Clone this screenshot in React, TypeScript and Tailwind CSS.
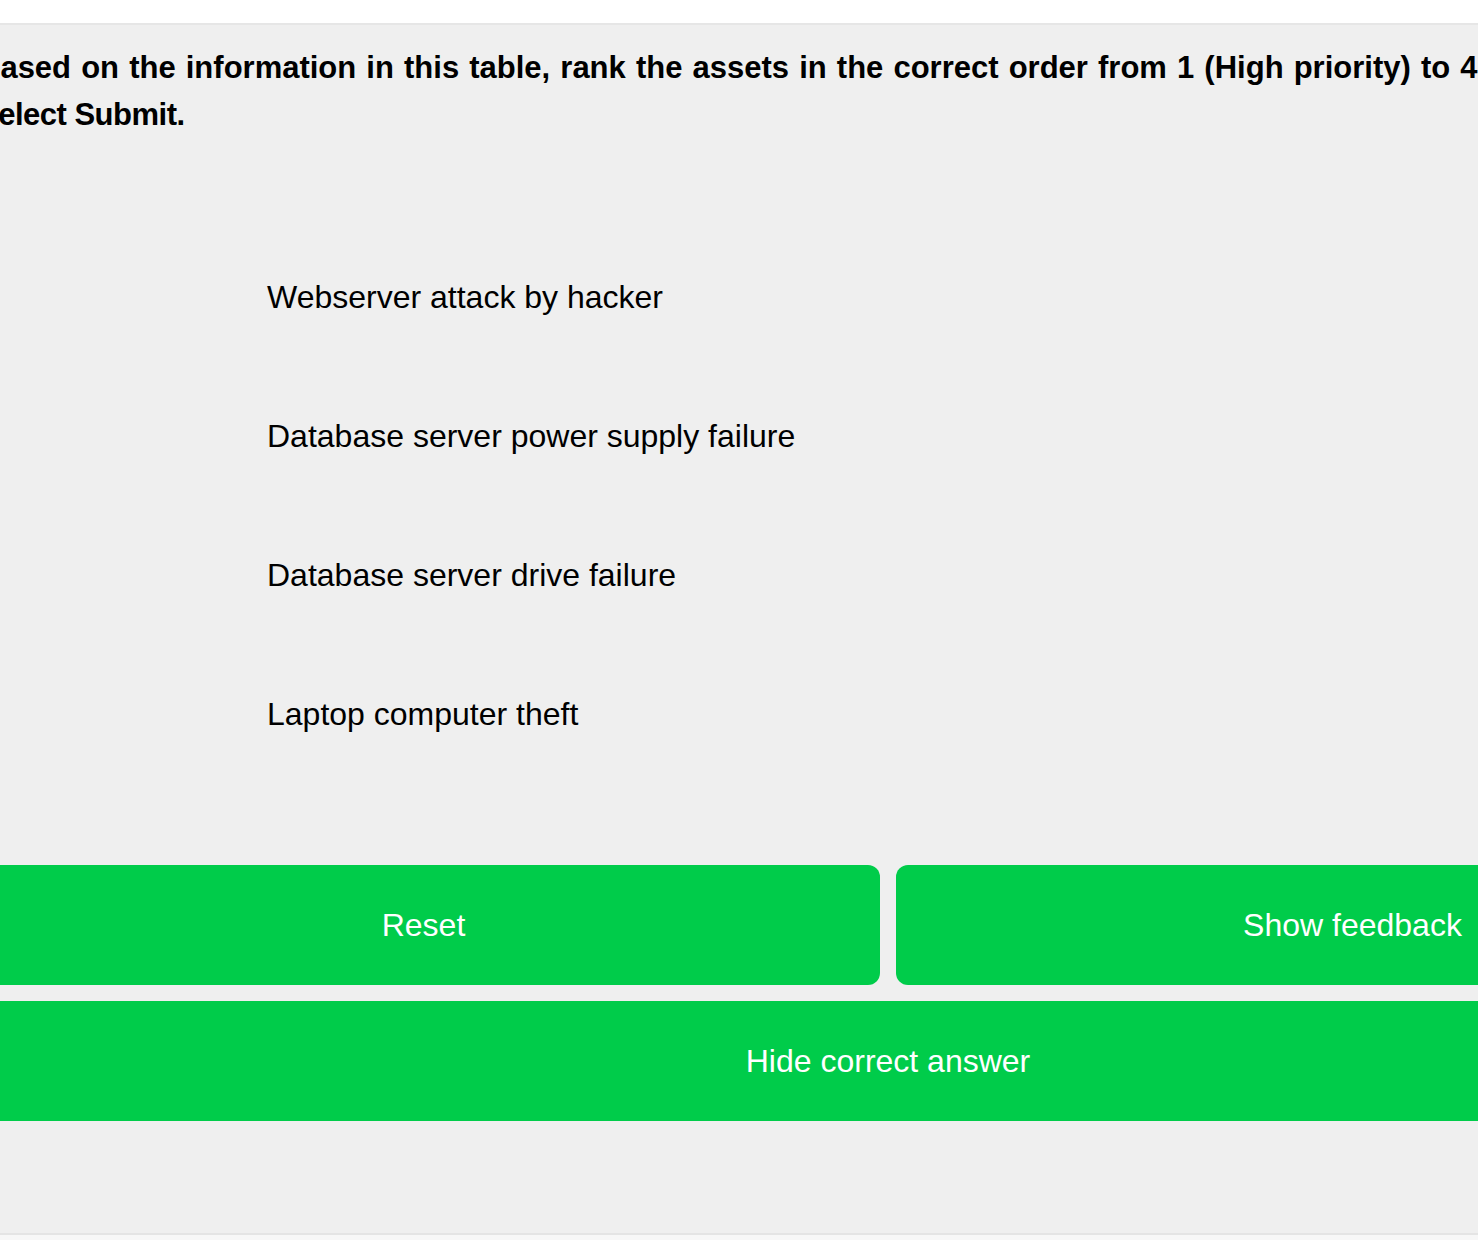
const items = [
  "Webserver attack by hacker",
  "Database server power supply failure",
  "Database server drive failure",
  "Laptop computer theft",
];

export default function App() {
  return (
    <div className="w-full h-[1240px] overflow-hidden bg-[#f7f7f7] font-['Liberation_Sans',Arial,sans-serif] text-black">
      <div className="h-[23px] bg-white border-b-2 border-[#e6e6e6] box-content" />
      <div className="bg-[#efefef] border-b-2 border-[#e4e4e4]">
        <div className="ml-[-33px] w-[1842px] pt-[19px] pb-[112px]">
          <p className="pl-[11px] text-[31px] leading-[47px] font-bold whitespace-nowrap">
            <span className="[word-spacing:1.5px]">
              Based on the information in this table, rank the assets in the correct order from 1 (High priority) to 4 (Low priority).
            </span>
            <br />
            <span className="tracking-[-0.5px]">Select Submit.</span>
          </p>

          <ul className="mt-[89px] pl-[300px] flex flex-col">
            {items.map((item) => (
              <li key={item} className="h-[139px] flex items-center text-[32px] leading-[36px]">
                {item}
              </li>
            ))}
          </ul>

          <div className="mt-[82px] flex flex-col gap-4">
            <div className="grid grid-cols-2 gap-4">
              <button className="h-[120px] rounded-xl bg-[#00cc4a] text-white text-[32px]">Reset</button>
              <button className="h-[120px] rounded-xl bg-[#00cc4a] text-white text-[32px]">Show feedback</button>
            </div>
            <button className="h-[120px] rounded-xl bg-[#00cc4a] text-white text-[32px]">Hide correct answer</button>
          </div>
        </div>
      </div>
    </div>
  );
}
